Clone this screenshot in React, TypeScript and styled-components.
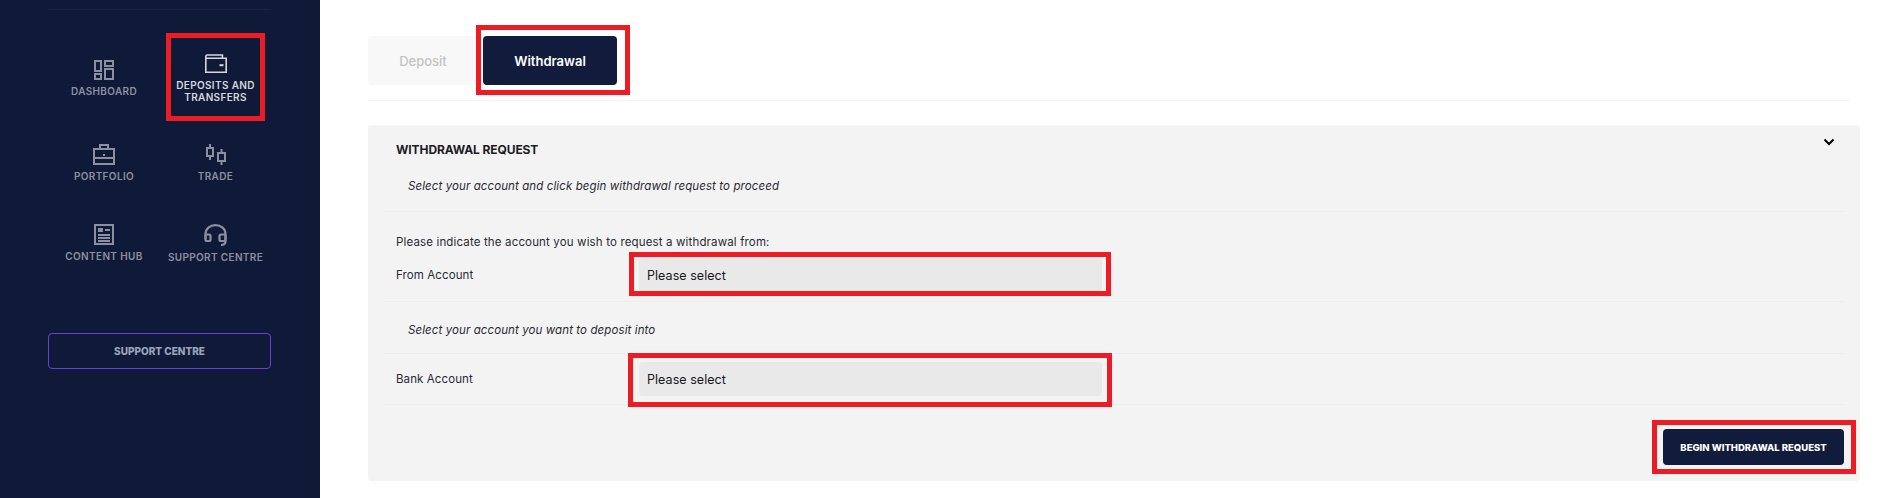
import React from 'react';
import styled, { createGlobalStyle } from 'styled-components';

const GlobalStyle = createGlobalStyle`
	html, body {
		margin: 0;
		padding: 0;
		background: #ffffff;
	}
	body {
		font-family: Inter, "Open Sans", "Liberation Sans", sans-serif;
	}
`;

const Page = styled.div`
	display: flex;
	width: 1888px;
	height: 498px;
	overflow: hidden;
`;

const Sidebar = styled.aside`
	flex: none;
	width: 320px;
	box-sizing: border-box;
	padding: 9px 49px 0 48px;
	background: #0f1a38;
`;

const SideRule = styled.div`
	height: 1px;
	background: #1b2647;
`;

const NavGrid = styled.nav`
	display: grid;
	grid-template-columns: 112px 111px;
	grid-template-rows: 88px 82px 78px;
	margin-top: 24px;
`;

const NavItem = styled.div<{ $active?: boolean }>`
	position: relative;
	display: flex;
	flex-direction: column;
	align-items: center;
	justify-content: center;
	gap: 5px;
	font-size: 10px;
	line-height: 12px;
	font-weight: 600;
	letter-spacing: 0.35px;
	text-align: center;
	text-transform: uppercase;
	color: ${(p) => (p.$active ? '#d5d7dc' : '#8b90a1')};
	svg {
		display: block;
		flex: none;
	}
`;

const SupportBtn = styled.div`
	display: flex;
	align-items: center;
	justify-content: center;
	height: 36px;
	margin-top: 51px;
	box-sizing: border-box;
	border: 1px solid #6c3be4;
	border-radius: 4px;
	font-size: 10px;
	font-weight: 800;
	color: #9aa5bd;
`;

const Main = styled.main`
	flex: 1;
	min-width: 0;
	padding: 36px 28px 0 48px;
`;

const Tabs = styled.div`
	display: flex;
	width: 249px;
	height: 49px;
	background: #f8f8f8;
	border-radius: 4px;
`;

const Tab = styled.div<{ $active?: boolean }>`
	position: relative;
	display: flex;
	align-items: center;
	justify-content: center;
	width: ${(p) => (p.$active ? '134px' : '110px')};
	margin-right: ${(p) => (p.$active ? '0' : '5px')};
	border-radius: 4px;
	font-size: 13px;
	font-weight: ${(p) => (p.$active ? 600 : 500)};
	background: ${(p) => (p.$active ? '#111c3c' : 'transparent')};
	color: ${(p) => (p.$active ? '#ffffff' : '#c4c4c4')};
`;

const TopRule = styled.div`
	height: 1px;
	margin: 15px 10px 24px 0;
	background: #f3f3f3;
`;

const Panel = styled.section`
	height: 356px;
	box-sizing: border-box;
	background: #f3f3f3;
	border-radius: 4px;
`;

const PanelHead = styled.div`
	display: flex;
	justify-content: space-between;
	height: 50px;
	padding: 0 25px 0 28px;
`;

const PanelTitle = styled.h2`
	margin: 0;
	font-size: 12px;
	line-height: 50px;
	font-weight: 700;
	letter-spacing: -0.1px;
	color: #1c1c24;
`;

const Chevron = styled.svg`
	margin-top: 13px;
`;

const Body = styled.div`
	margin: 0 16px;
`;

const Note = styled.div`
	height: 22px;
	padding: 0 0 14px 24px;
	font-size: 11.5px;
	line-height: 22px;
	font-style: italic;
	letter-spacing: 0.1px;
	color: #2a2a33;
	border-bottom: 1px solid #ececec;
`;

const Intro = styled.div`
	margin-top: 22px;
	padding-left: 12px;
	font-size: 11.5px;
	line-height: 16px;
	letter-spacing: 0.15px;
	color: #2a2a33;
`;

const NoteRow = styled(Note)`
	height: 22px;
	padding-top: 17px;
	padding-bottom: 12px;
`;

const FieldRow = styled.div<{ $top: number; $bottom: number }>`
	display: flex;
	align-items: center;
	padding: ${(p) => p.$top}px 0 ${(p) => p.$bottom}px 12px;
	border-bottom: 1px solid #ececec;
`;

const FieldLabel = styled.label`
	flex: none;
	width: 243px;
	font-size: 11.5px;
	letter-spacing: 0.1px;
	color: #2a2a33;
`;

const Select = styled.div`
	position: relative;
	display: flex;
	align-items: center;
	width: 463px;
	height: 34px;
	box-sizing: border-box;
	padding-left: 8px;
	background: #e9e9e9;
	border-radius: 4px;
	font-size: 12.5px;
	font-weight: 400;
	letter-spacing: 0.05px;
	color: #16161d;
`;

const Actions = styled.div`
	display: flex;
	justify-content: flex-end;
	margin: 24px 16px 0 0;
`;

const Submit = styled.div`
	position: relative;
	display: flex;
	align-items: center;
	justify-content: center;
	width: 181px;
	height: 36px;
	border-radius: 4px;
	background: #111c3c;
	color: #ffffff;
	font-size: 9.5px;
	font-weight: 800;
`;

// red annotation drawn over the screenshot
const Mark = styled.span<{ $t: number; $r: number; $b: number; $l: number }>`
	position: absolute;
	top: ${(p) => -p.$t}px;
	right: ${(p) => -p.$r}px;
	bottom: ${(p) => -p.$b}px;
	left: ${(p) => -p.$l}px;
	border: 5px solid #ed1c24;
	pointer-events: none;
`;

const IconDashboard = () => (
	<svg width="20" height="20" viewBox="0 0 20 20" fill="none" stroke="#8b90a1" strokeWidth="2">
		<rect x="1" y="1" width="6" height="10" />
		<rect x="11" y="1" width="8" height="5" />
		<rect x="1" y="14" width="6" height="5" />
		<rect x="11" y="9" width="8" height="10" />
	</svg>
);

const IconWallet = () => (
	<svg width="24" height="20" viewBox="0 0 24 20" fill="none" stroke="#d5d7dc" strokeWidth="1.6">
		<path d="M1.8 5V18.2H22.2V4.2H1.8V2.6Q1.8 1 3.4 1H18.4V4.2" />
		<path d="M15.5 11.2H19.5" strokeWidth="2" />
	</svg>
);

const IconBriefcase = () => (
	<svg width="22" height="21" viewBox="0 0 22 21" fill="none" stroke="#8b90a1" strokeWidth="2">
		<rect x="1" y="5" width="20" height="15" />
		<path d="M7 5V1H15V5" />
		<path d="M1 14H21" />
		<path d="M11 10V12" />
	</svg>
);

const IconCandles = () => (
	<svg width="20" height="21" viewBox="0 0 20 21" fill="none" stroke="#8b90a1" strokeWidth="2">
		<rect x="1" y="4" width="6" height="8" />
		<path d="M4 0V4M4 12V16" />
		<rect x="12" y="9" width="7" height="8" />
		<path d="M15.500 5V9M15.500 17V21" />
	</svg>
);

const IconNews = () => (
	<svg width="20" height="21" viewBox="0 0 20 21" fill="none" stroke="#8b90a1" strokeWidth="2">
		<rect x="1" y="1" width="18" height="19" />
		<rect x="4" y="4" width="5" height="4" fill="#8b90a1" stroke="none" />
		<path d="M11 6H16M4 11H16M4 14H16M4 17H16" />
	</svg>
);

const IconHeadset = () => (
	<svg width="23" height="22" viewBox="0 0 23 22" fill="none" stroke="#8b90a1" strokeWidth="2.200">
		<path d="M1.500 15V10C1.500 4.500 6 1.200 11.500 1.200S21.500 4.500 21.500 10V17C21.500 19.500 20 21 17 21" />
		<rect x="1.500" y="10.500" width="5" height="6.500" rx="1.500" />
		<rect x="15.500" y="10.500" width="6" height="6.500" rx="1.500" />
	</svg>
);

function App() {
	return (
		<Page>
			<GlobalStyle />
			<Sidebar>
				<SideRule />
				<NavGrid>
					<NavItem>
						<IconDashboard />
						Dashboard
					</NavItem>
					<NavItem $active>
						<IconWallet />
						<span>
							Deposits and
							<br />
							Transfers
						</span>
						<Mark $t={1} $r={-6} $b={-1} $l={-6} />
					</NavItem>
					<NavItem>
						<IconBriefcase />
						Portfolio
					</NavItem>
					<NavItem>
						<IconCandles />
						Trade
					</NavItem>
					<NavItem>
						<IconNews />
						Content Hub
					</NavItem>
					<NavItem>
						<IconHeadset />
						Support Centre
					</NavItem>
				</NavGrid>
				<SupportBtn>SUPPORT CENTRE</SupportBtn>
			</Sidebar>
			<Main>
				<Tabs>
					<Tab>Deposit</Tab>
					<Tab $active>
						Withdrawal
						<Mark $t={11} $r={13} $b={10} $l={7} />
					</Tab>
				</Tabs>
				<TopRule />
				<Panel>
					<PanelHead>
						<PanelTitle>WITHDRAWAL REQUEST</PanelTitle>
						<Chevron width="12" height="8" viewBox="0 0 12 8" fill="none" stroke="#000000" strokeWidth="2">
							<path d="M1.500 1.500L6 6L10.500 1.500" />
						</Chevron>
					</PanelHead>
					<Body>
						<Note>Select your account and click begin withdrawal request to proceed</Note>
						<Intro>Please indicate the account you wish to request a withdrawal from:</Intro>
						<FieldRow $top={8} $bottom={9}>
							<FieldLabel>From Account</FieldLabel>
							<Select>
								Please select
								<Mark $t={6} $r={9} $b={4} $l={10} />
							</Select>
						</FieldRow>
						<NoteRow>Select your account you want to deposit into</NoteRow>
						<FieldRow $top={8} $bottom={8}>
							<FieldLabel>Bank Account</FieldLabel>
							<Select>
								Please select
								<Mark $t={9} $r={10} $b={11} $l={11} />
							</Select>
						</FieldRow>
					</Body>
					<Actions>
						<Submit>
							BEGIN WITHDRAWAL REQUEST
							<Mark $t={9} $r={12} $b={9} $l={11} />
						</Submit>
					</Actions>
				</Panel>
			</Main>
		</Page>
	);
}

export default App;
